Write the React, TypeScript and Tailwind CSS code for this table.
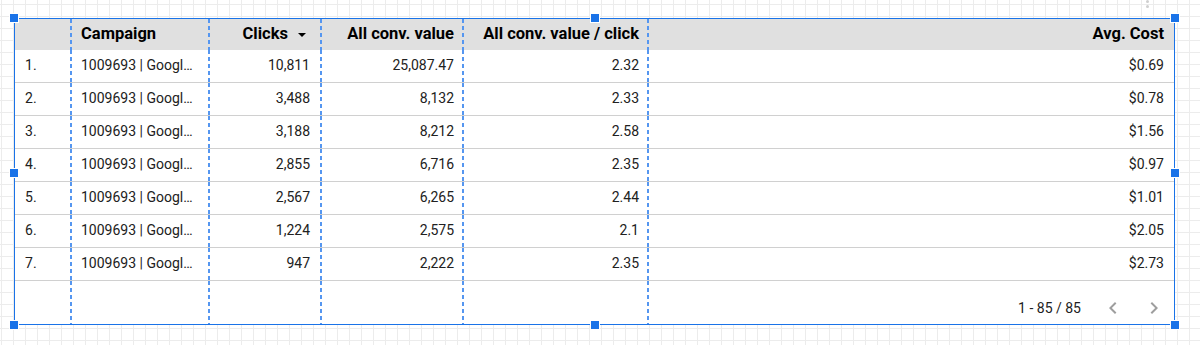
type Row = {
  campaign: string;
  clicks: string;
  convValue: string;
  perClick: string;
  avgCost: string;
};

const ROWS: readonly Row[] = [
  { campaign: "1009693 | Googl…", clicks: "10,811", convValue: "25,087.47", perClick: "2.32", avgCost: "$0.69" },
  { campaign: "1009693 | Googl…", clicks: "3,488", convValue: "8,132", perClick: "2.33", avgCost: "$0.78" },
  { campaign: "1009693 | Googl…", clicks: "3,188", convValue: "8,212", perClick: "2.58", avgCost: "$1.56" },
  { campaign: "1009693 | Googl…", clicks: "2,855", convValue: "6,716", perClick: "2.35", avgCost: "$0.97" },
  { campaign: "1009693 | Googl…", clicks: "2,567", convValue: "6,265", perClick: "2.44", avgCost: "$1.01" },
  { campaign: "1009693 | Googl…", clicks: "1,224", convValue: "2,575", perClick: "2.1", avgCost: "$2.05" },
  { campaign: "1009693 | Googl…", clicks: "947", convValue: "2,222", perClick: "2.35", avgCost: "$2.73" },
];

const COLS = "grid grid-cols-[57px_138px_112px_142px_185px_1fr]";
// dashed blue column divider drawn on the right edge of a cell
const DASH =
  "bg-[linear-gradient(to_bottom,#5596f0_4px,transparent_4px)] bg-repeat-y [background-position:right_top] [background-size:2px_7px] pr-[2px]";

function Handle({ className }: { className: string }) {
  return (
    <span
      className={`absolute h-[8px] w-[8px] bg-[#1a73e8] outline outline-1 outline-white ${className}`}
    />
  );
}

function Chevron({ dir }: { dir: "left" | "right" }) {
  return (
    <svg width="24" height="24" viewBox="0 0 24 24" className="fill-[#9e9e9e]">
      {dir === "left" ? (
        <path d="M15.41 7.41L14 6l-6 6 6 6 1.41-1.41L10.83 12z" />
      ) : (
        <path d="M10 6L8.59 7.41 13.17 12l-4.58 4.59L10 18l6-6z" />
      )}
    </svg>
  );
}

export default function App() {
  return (
    <div className="relative h-[345px] w-[1200px] overflow-hidden bg-white bg-[linear-gradient(to_right,#ececec_1px,transparent_1px),linear-gradient(to_bottom,#ececec_1px,transparent_1px)] pl-[14px] pt-[18px] font-['Roboto',sans-serif] [background-position:1px_4px] [background-size:12px_12px]">
      {/* more menu, mostly off the top */}
      <div className="absolute left-[1146px] top-0 flex flex-col gap-[2px]">
        <span className="h-[3px] w-[3px] rounded-full bg-[#cfcfcf]" />
        <span className="h-[3px] w-[3px] rounded-full bg-[#cfcfcf]" />
      </div>

      <div className="relative w-[1161px] border border-[#1a73e8] bg-white text-[14px] text-[#212121]">
        {/* header */}
        <div className={`${COLS} h-[31px] bg-[#e0e0e0] text-[16.5px] font-bold text-black`}>
          <div className={DASH} />
          <div className={`${DASH} flex items-center pl-[9px]`}>Campaign</div>
          <div className={`${DASH} flex items-center justify-end gap-[10px] pr-[16px]`}>
            Clicks
            <svg width="8" height="4" viewBox="0 0 8 4" className="fill-black">
              <path d="M0 0h8L4 4z" />
            </svg>
          </div>
          <div className={`${DASH} flex items-center justify-end pr-[10px]`}>All conv. value</div>
          <div className={`${DASH} flex items-center justify-end pr-[10px]`}>All conv. value / click</div>
          <div className="flex items-center justify-end pr-[10px]">Avg. Cost</div>
        </div>

        {/* rows */}
        {ROWS.map((r, i) => (
          <div key={i} className={`${COLS} h-[33px] border-b border-[#d0d0d0]`}>
            <div className={`${DASH} flex items-center pb-[2px] pl-[10px]`}>{i + 1}.</div>
            <div className={`${DASH} flex items-center pb-[2px] pl-[9px]`}>{r.campaign}</div>
            <div className={`${DASH} flex items-center justify-end pb-[2px] pr-[12px]`}>{r.clicks}</div>
            <div className={`${DASH} flex items-center justify-end pb-[2px] pr-[10px]`}>{r.convValue}</div>
            <div className={`${DASH} flex items-center justify-end pb-[2px] pr-[10px]`}>{r.perClick}</div>
            <div className="flex items-center justify-end pb-[2px] pr-[10px]">{r.avgCost}</div>
          </div>
        ))}

        {/* footer */}
        <div className={`${COLS} h-[43px]`}>
          <div className={DASH} />
          <div className={DASH} />
          <div className={DASH} />
          <div className={DASH} />
          <div className={DASH} />
          <div className="flex items-end justify-end pb-[4px] pr-[8px]">
            <div className="flex h-[24px] items-center">
              <span className="mr-[20px]">1 - 85 / 85</span>
              <Chevron dir="left" />
              <span className="w-[17px]" />
              <Chevron dir="right" />
            </div>
          </div>
        </div>

        <Handle className="-left-[5px] -top-[5px]" />
        <Handle className="left-[576px] -top-[5px]" />
        <Handle className="-right-[5px] -top-[5px]" />
        <Handle className="-left-[5px] top-[150px]" />
        <Handle className="-right-[5px] top-[150px]" />
        <Handle className="-left-[5px] -bottom-[5px]" />
        <Handle className="left-[576px] -bottom-[5px]" />
        <Handle className="-right-[5px] -bottom-[5px]" />
      </div>
    </div>
  );
}
